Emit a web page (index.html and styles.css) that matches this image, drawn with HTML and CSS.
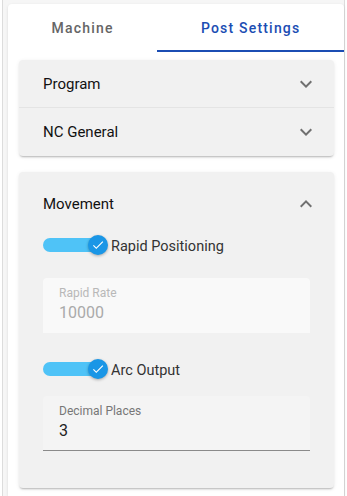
FILE: index.html
```html
<!DOCTYPE html>
<html lang="en">
<head>
    <meta charset="UTF-8">
    <meta name="viewport" content="width=device-width, initial-scale=1.0">
    <title>Post Settings</title>
    <link rel="stylesheet" href="styles.css">
</head>
<body>
    <div class="frame">
        <div class="card">
            <div class="tabs">
                <div class="tab">Machine</div>
                <div class="tab active">Post Settings</div>
            </div>

            <div class="panels">
                <div class="panel-group">
                    <div class="panel-header">
                        <span>Program</span>
                        <svg class="chevron" width="24" height="24" viewBox="0 0 24 24"><path d="M7.41 8.58 12 13.17l4.59-4.59L18 10l-6 6-6-6z"/></svg>
                    </div>
                    <div class="panel-header divided">
                        <span>NC General</span>
                        <svg class="chevron" width="24" height="24" viewBox="0 0 24 24"><path d="M7.41 8.58 12 13.17l4.59-4.59L18 10l-6 6-6-6z"/></svg>
                    </div>
                </div>

                <div class="panel-group open">
                    <div class="panel-header tall">
                        <span>Movement</span>
                        <svg class="chevron" width="24" height="24" viewBox="0 0 24 24"><path d="M7.41 15.41 12 10.83l4.59 4.58L18 14l-6-6-6 6z"/></svg>
                    </div>
                    <div class="panel-content">
                        <label class="switch">
                            <span class="track"></span>
                            <span class="thumb">
                                <svg width="14" height="14" viewBox="0 0 24 24"><path d="M9 16.17 4.83 12l-1.42 1.41L9 19 21 7l-1.41-1.41z"/></svg>
                            </span>
                            <span class="switch-label">Rapid Positioning</span>
                        </label>

                        <div class="field disabled">
                            <div class="field-label">Rapid Rate</div>
                            <div class="field-value">10000</div>
                        </div>

                        <label class="switch">
                            <span class="track"></span>
                            <span class="thumb">
                                <svg width="14" height="14" viewBox="0 0 24 24"><path d="M9 16.17 4.83 12l-1.42 1.41L9 19 21 7l-1.41-1.41z"/></svg>
                            </span>
                            <span class="switch-label">Arc Output</span>
                        </label>

                        <div class="field last">
                            <div class="field-label">Decimal Places</div>
                            <div class="field-value">3</div>
                        </div>
                    </div>
                </div>
            </div>
        </div>
    </div>
</body>
</html>
```

FILE: styles.css
```css
body {
    margin: 0;
    background: #fff;
    font-family: Roboto, "Liberation Sans", sans-serif;
    height: 496px;
    overflow: hidden;
}

.frame {
    margin: 0 2px;
    height: 100%;
    background: #f6f6f6;
    border-left: 1px solid #dcdcdc;
    border-right: 1px solid #dcdcdc;
    padding: 4px 0 0 5px;
    box-sizing: border-box;
}

.card {
    background: #fff;
    border-radius: 4px 4px 0 0;
    box-shadow: 0 1px 3px rgba(0, 0, 0, 0.12);
    height: 100%;
}

.tabs {
    display: flex;
    height: 48px;
}

.tab {
    flex: 1 1 auto;
    display: flex;
    align-items: center;
    justify-content: center;
    font-size: 14px;
    font-weight: 500;
    letter-spacing: 1.2px;
    color: #666;
    border-bottom: 2px solid transparent;
    padding-top: 2px;
    box-sizing: border-box;
}

.tab.active {
    color: #1b4db3;
    border-bottom-color: #1b4db3;
}

.panels {
    padding: 8px 10px 0 11px;
}

.panel-group {
    background: #f1f1f1;
    border-radius: 4px;
    box-shadow: 0 2px 2px -1px rgba(0, 0, 0, 0.25), 0 1px 4px rgba(0, 0, 0, 0.08);
}

.panel-group.open {
    margin-top: 16px;
}

.panel-header {
    height: 47px;
    display: flex;
    align-items: center;
    justify-content: space-between;
    padding: 0 16px 0 24px;
    font-size: 15px;
    color: #111;
}

.panel-header.divided {
    height: 48px;
    border-top: 1px solid #e4e4e4;
}

.panel-header.tall {
    height: 63px;
}

.chevron {
    fill: #707070;
}

.panel-content {
    padding: 0 24px 37px 24px;
}

.switch {
    display: flex;
    align-items: center;
    position: relative;
    height: 20px;
}

.track {
    width: 57px;
    height: 14px;
    border-radius: 7px;
    background: #4fc3f7;
}

.thumb {
    position: absolute;
    left: 45px;
    top: 0;
    width: 20px;
    height: 20px;
    border-radius: 50%;
    background: #1a96e6;
    box-shadow: 0 1px 3px rgba(0, 0, 0, 0.3);
    display: flex;
    align-items: center;
    justify-content: center;
}

.thumb svg {
    fill: #fff;
}

.switch-label {
    margin-left: 11px;
    font-size: 14.5px;
    color: #333;
    padding-top: 3px;
}

.field {
    margin-top: 23px;
    height: 55px;
    background: #f4f4f4;
    border-radius: 4px 4px 0 0;
    border-bottom: 1px solid #8a8a8a;
    padding: 7px 16px 0 16px;
    box-sizing: border-box;
}

.field.last {
    margin-top: 17px;
}

.field + .switch {
    margin-top: 26px;
}

.field.disabled {
    background: #f9f9f9;
    border-bottom-color: transparent;
}

.field-label {
    font-size: 12px;
    color: #777;
    line-height: 16px;
}

.field-value {
    font-size: 16px;
    color: #222;
    line-height: 24px;
}

.field.disabled .field-label {
    color: #b8b8b8;
}

.field.disabled .field-value {
    color: #aaa;
}
```
